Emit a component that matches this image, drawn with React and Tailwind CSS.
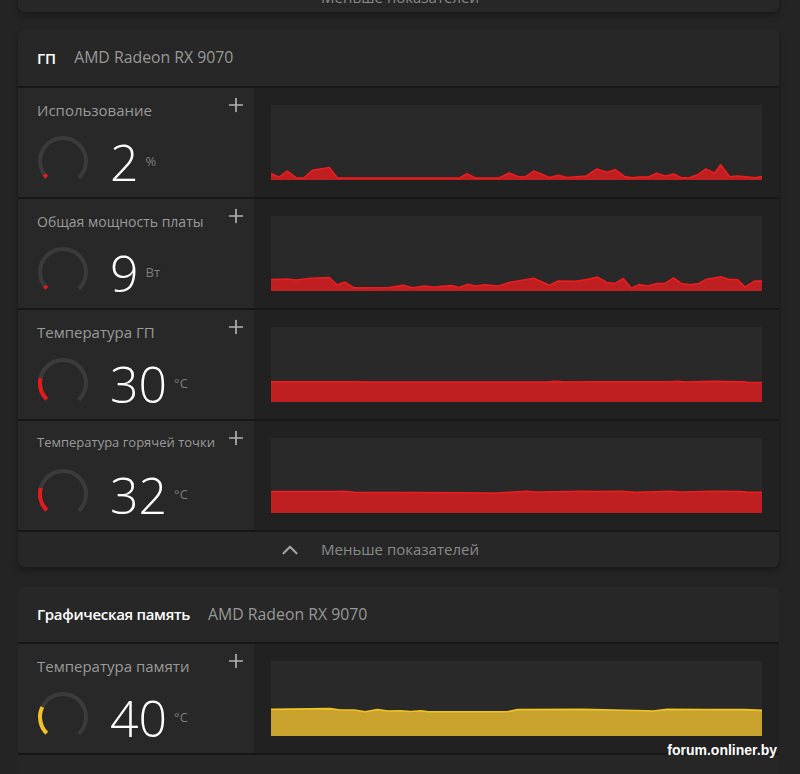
import { ChevronUp, Plus } from "lucide-react";

const W = 491;
const H = 74;

// chart points: [x, y] read off the screenshot, converted to chart space
const series = {
  usage: {
    bottom: 262,
    pts: [[62,244],[85,254],[108,237],[135,257],[155,257],[180,235],[228,227],[252,257],[598,257],[620,244],[645,257],[710,257],[740,242],[765,252],[785,254],[810,237],[855,255],[880,249],[905,255],[960,251],[990,231],[1018,240],[1042,233],[1068,252],[1090,256],[1110,254],[1135,254],[1160,243],[1185,251],[1208,245],[1232,256],[1255,255],[1278,247],[1300,231],[1325,243],[1342,219],[1368,253],[1390,251],[1415,253],[1440,256],[1460,252]],
  },
  power: {
    bottom: 594,
    pts: [[62,562],[108,560],[135,563],[175,558],[228,556],[250,577],[272,569],[298,585],[400,584],[438,578],[465,585],[500,580],[525,583],[575,579],[598,584],[622,575],[645,580],[670,577],[710,580],[740,570],[810,558],[855,578],[880,566],[930,567],[960,562],[992,555],[1018,570],[1042,573],[1065,559],[1088,586],[1110,576],[1135,580],[1160,573],[1185,572],[1208,557],[1230,573],[1255,577],[1280,573],[1300,562],[1342,554],[1365,561],[1390,562],[1412,583],[1440,566],[1460,566]],
  },
  temp: {
    bottom: 269,
    pts: [[62,212],[300,212],[345,213],[850,213],[870,211],[900,213],[990,212],[1060,212],[1200,212],[1220,211],[1240,213],[1320,211],[1410,212],[1420,214],[1460,214]],
  },
  hotspot: {
    bottom: 602,
    pts: [[62,542],[240,542],[270,541],[300,544],[600,545],[700,546],[790,541],[820,543],[950,541],[1000,542],[1060,541],[1100,544],[1200,541],[1230,543],[1320,541],[1400,542],[1420,544],[1460,544]],
  },
  mem: {
    bottom: 607,
    pts: [[62,532],[230,530],[260,534],[300,534],[330,539],[365,533],[395,537],[430,536],[460,538],[490,536],[510,539],[735,539],[765,533],[950,532],[1130,536],[1150,537],[1190,532],[1300,533],[1410,533],[1460,535]],
  },
};

function Chart({ data, fill, line }) {
  const pts = data.pts.map(([zx, zy]) => [
    ((zx - 62) * W) / 1398,
    H - (data.bottom - zy) / 2.85,
  ]);
  const lineStr = pts.map((p) => `${p[0].toFixed(1)},${p[1].toFixed(1)}`).join(" ");
  const area = `0,${H} ${lineStr} ${W},${H}`;
  return (
    <svg viewBox={`0 0 ${W} ${H}`} preserveAspectRatio="none" className="h-full w-full">
      <polygon points={area} fill={fill} />
      <polyline points={lineStr} fill="none" stroke={line} strokeWidth="1.6" strokeLinejoin="round" />
    </svg>
  );
}

function Gauge({ frac, color }) {
  const r = 23;
  const c = 2 * Math.PI * r;
  const arc = c * 0.75;
  return (
    <svg width="52" height="52" viewBox="0 0 52 52" className="shrink-0">
      <g transform="rotate(135 26 26)">
        <circle cx="26" cy="26" r={r} fill="none" stroke="#3b3b3b" strokeWidth="4" strokeDasharray={`${arc} ${c}`} />
        <circle cx="26" cy="26" r={r} fill="none" stroke={color} strokeWidth="4" strokeDasharray={`${arc * frac} ${c}`} />
      </g>
    </svg>
  );
}

function MetricRow({ label, labelSize, value, unit, frac, color, data, fill, line }) {
  return (
    <div className="flex h-[111px] border-t-2 border-[#171717]">
      <div className="w-[236px] shrink-0 bg-[#282828] pl-[19px] pr-[7px] pt-[11px]">
        <div className="flex h-[22px] items-center justify-between">
          <span className={`${labelSize} text-[#9a9a9a]`}>{label}</span>
          <Plus size={22} strokeWidth={1.8} className="-mt-[10px] text-[#b3b3b3]" />
        </div>
        <div className="mt-[13px] flex items-center">
          <Gauge frac={frac} color={color} />
          <div className="ml-[21px] mt-[3px] flex items-start">
            <span className="text-[50px] font-light leading-none text-white">{value}</span>
            <span className="ml-[7px] mt-[18px] text-[13px] leading-none text-[#7d7d7d]">{unit}</span>
          </div>
        </div>
      </div>
      <div className="flex-1 bg-[#212121] p-[17px]">
        <div className="h-full bg-[#292929]">
          <Chart data={data} fill={fill} line={line} />
        </div>
      </div>
    </div>
  );
}

function Footer({ className = "", hideChevron = false }) {
  return (
    <div className={`flex h-[37px] shrink-0 items-center justify-center ${className}`}>
      <ChevronUp size={26} strokeWidth={2} className={hideChevron ? "invisible" : "text-[#a3a3a3]"} />
      <span className="ml-[18px] text-[15px] text-[#8a8a8a]">Меньше показателей</span>
      <span className="ml-[18px] w-[23px]" />
    </div>
  );
}

const RED = { color: "#e8191b", fill: "#c01f21", line: "#ec1c1f" };
const YEL = { color: "#f2c12a", fill: "#c9a22e", line: "#f1c426" };

export default function App() {
  return (
    <div
      className="relative h-[774px] overflow-hidden bg-[#242424] px-[18px]"
      style={{ fontFamily: '"Open Sans", "Noto Sans", sans-serif' }}
    >
      <div className="w-[761px]">
        {/* previous card, cut off at the top */}
        <div className="-mt-[21px] flex h-[33px] flex-col rounded-b-md bg-[#272727] shadow-[0_3px_6px_rgba(0,0,0,0.35)]">
          <Footer hideChevron />
        </div>

        {/* GPU */}
        <div className="mt-[18px] overflow-hidden rounded-md bg-[#272727] shadow-[0_3px_6px_rgba(0,0,0,0.35)]">
          <div className="flex h-[56px] items-center gap-[18px] px-[19px]">
            <span className="text-[15px] font-semibold text-white">ГП</span>
            <span className="text-[15.8px] text-[#999999]">AMD Radeon RX 9070</span>
          </div>
          <MetricRow label="Использование" labelSize="text-[15px]" value="2" unit="%" frac={0.035} color={RED.color} data={series.usage} fill={RED.fill} line={RED.line} />
          <MetricRow label="Общая мощность платы" labelSize="text-[14px]" value="9" unit="Вт" frac={0.03} color={RED.color} data={series.power} fill={RED.fill} line={RED.line} />
          <MetricRow label="Температура ГП" labelSize="text-[15px]" value="30" unit="°C" frac={0.21} color={RED.color} data={series.temp} fill={RED.fill} line={RED.line} />
          <MetricRow label="Температура горячей точки" labelSize="text-[13px]" value="32" unit="°C" frac={0.22} color={RED.color} data={series.hotspot} fill={RED.fill} line={RED.line} />
          <Footer className="border-t-2 border-[#171717]" />
        </div>

        {/* Graphics memory */}
        <div className="mt-[20px] overflow-hidden rounded-t-md bg-[#272727]">
          <div className="flex h-[55px] items-center gap-[18px] px-[19px]">
            <span className="text-[15px] font-semibold tracking-[-0.3px] text-white">Графическая память</span>
            <span className="text-[15.8px] text-[#999999]">AMD Radeon RX 9070</span>
          </div>
          <MetricRow label="Температура памяти" labelSize="text-[15px]" value="40" unit="°C" frac={0.26} color={YEL.color} data={series.mem} fill={YEL.fill} line={YEL.line} />
          <div className="h-[40px] border-t-2 border-[#171717] bg-[#262626]" />
        </div>
      </div>

      <div
        className="absolute bottom-[13px] right-[23px] text-[14px] font-bold text-white"
        style={{ fontFamily: '"Liberation Sans", Arial, sans-serif' }}
      >
        forum.onliner.by
      </div>
    </div>
  );
}
